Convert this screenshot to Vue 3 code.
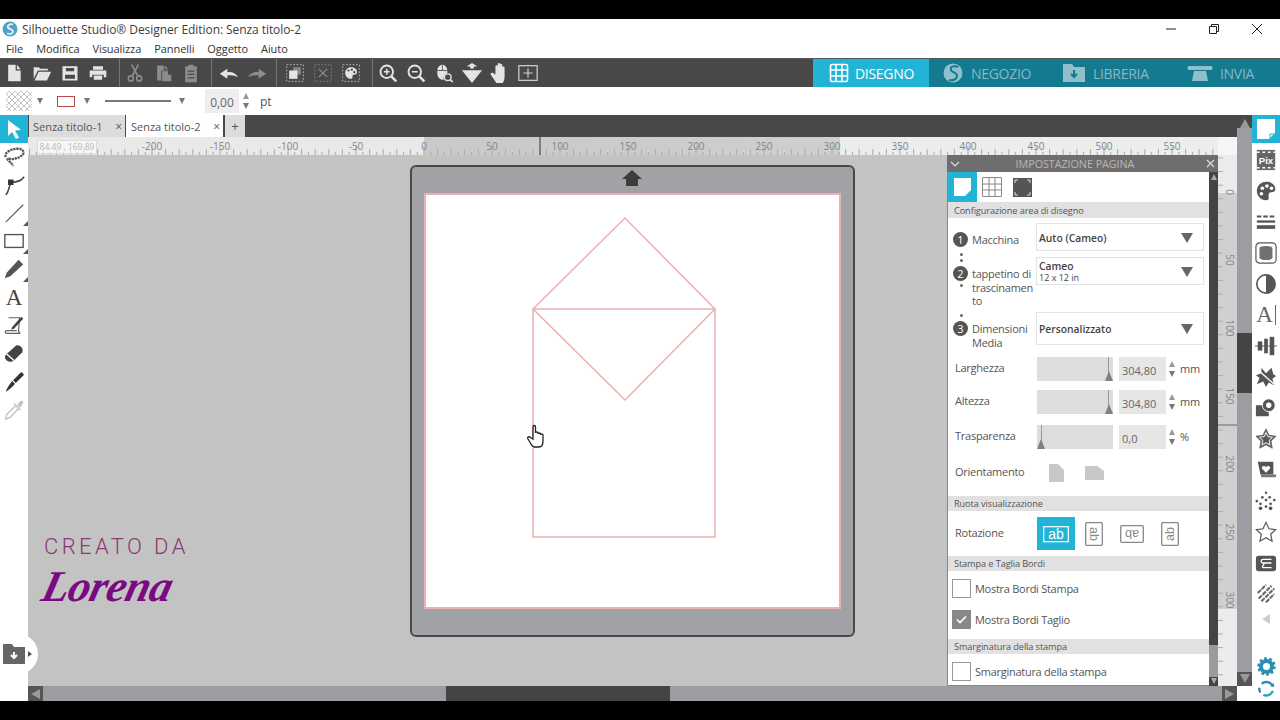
<script setup>
const hTicks = []
for (let u = -290; u <= 580; u += 5) {
  const x = 396 + u * 1.36
  const h = u % 50 === 0 ? 9 : u % 10 === 0 ? 6 : 3
  hTicks.push({ x, h })
}
const hLabels = []
for (let u = -200; u <= 550; u += 50) hLabels.push({ x: 396 + u * 1.36, t: u })
const vTicks = []
for (let u = -25; u <= 365; u += 10) {
  const y = 37 + u * 1.36
  vTicks.push({ y, w: u % 50 === 0 ? 8 : 5 })
}
const vLabels = []
for (let u = 0; u <= 300; u += 50) vLabels.push({ y: 37 + u * 1.36, t: u })
</script>

<template>
  <div class="app">
    <div class="black"></div>

    <header class="title">
      <svg class="logo" viewBox="0 0 16 16"><circle cx="8" cy="8" r="7.500" fill="#4fa3c7"/><path d="M11 3.500C8 2.500 5 4 6 6.500 7 8.500 11 8 11 10.500c0 2-3 3-6 2" fill="none" stroke="#e8f2f6" stroke-width="1.800"/></svg>
      <span class="title-text">Silhouette Studio® Designer Edition: Senza titolo-2</span>
      <div class="win">
        <svg width="12" height="12" viewBox="0 0 12 12"><path d="M1 6h10" stroke="#222" stroke-width="1"/></svg>
        <svg width="12" height="12" viewBox="0 0 12 12" fill="none" stroke="#222"><path d="M1.500 3.500h7v7h-7zM3.500 3.500v-2h7v7h-2"/></svg>
        <svg width="12" height="12" viewBox="0 0 12 12"><path d="M1 1l10 10M11 1L1 11" stroke="#222"/></svg>
      </div>
    </header>

    <nav class="menu">
      <span>File</span><span>Modifica</span><span>Visualizza</span><span>Pannelli</span><span>Oggetto</span><span>Aiuto</span>
    </nav>

    <div class="toolbar">
      <div class="tg g1">
        <div class="tb"><svg viewBox="0 0 24 24" fill="#e4e4e4"><path d="M5 2h9v7h6v13H5zM15.500 2l4.500 5.500h-4.500z"/></svg></div>
        <div class="tb"><svg viewBox="0 0 24 24" fill="#e4e4e4"><path d="M2 5h6l2 2h9v2H7L2 19zM8 10.500h15L18 21H3z"/></svg></div>
        <div class="tb"><svg viewBox="0 0 24 24" fill="#e4e4e4" fill-rule="evenodd"><path d="M3 4h18v17H3zM7 6v4h10V6zM6 14v5h12v-5z"/></svg></div>
        <div class="tb"><svg viewBox="0 0 24 24" fill="#e4e4e4"><path d="M6 4h12v4H6zM2 9h20v8h-3v-3H5v3H2zM7 15h10v5H7z"/></svg></div>
      </div>
      <div class="tg g2">
        <div class="tb"><svg viewBox="0 0 24 24" fill="none" stroke="#8c8c8c" stroke-width="2"><path d="M8 2l7 13M16 2L9 15"/><circle cx="7" cy="18.500" r="3"/><circle cx="17" cy="18.500" r="3"/></svg></div>
        <div class="tb"><svg viewBox="0 0 24 24" fill="#8c8c8c"><path d="M5 3h8v5h5v1h-8v12H5zM14 3l4 4h-4zM11 10h7v4h4v8H11z"/></svg></div>
        <div class="tb"><svg viewBox="0 0 24 24" fill="#8c8c8c" fill-rule="evenodd"><path d="M5 4h4V2h6v2h4v19H5zM8 9v1.500h8V9zM8 13v1.500h8V13zM8 17v1.500h8V17z"/></svg></div>
      </div>
      <div class="tg g3">
        <div class="tb"><svg viewBox="0 0 24 24" fill="#e4e4e4"><path d="M1 13l9-6v4c5-1 10 1 13 6-4-2-8-3-13-2v4z"/></svg></div>
        <div class="tb"><svg viewBox="0 0 24 24" fill="#8c8c8c"><path d="M23 13l-9-6v4C9 10 4 12 1 17c4-2 8-3 13-2v4z"/></svg></div>
      </div>
      <div class="tg g4">
        <div class="tb"><svg viewBox="0 0 24 24"><rect x="2" y="2" width="20" height="20" fill="none" stroke="#ccc" stroke-dasharray="2 2"/><rect x="10" y="5" width="9" height="9" fill="#888"/><rect x="5" y="9" width="10" height="10" fill="#e4e4e4"/></svg></div>
        <div class="tb"><svg viewBox="0 0 24 24"><rect x="2" y="2" width="20" height="20" fill="none" stroke="#888" stroke-dasharray="2 2"/><path d="M7 7l10 10M17 7L7 17" stroke="#8c8c8c" stroke-width="1.500"/></svg></div>
        <div class="tb"><svg viewBox="0 0 24 24"><rect x="2" y="2" width="20" height="20" fill="none" stroke="#ccc" stroke-dasharray="2 2"/><path d="M12 5c5 0 8 3 7 7-1 3-4 1-5 3s1 4-2 4c-4 0-7-3-7-7s3-7 7-7z" fill="#e4e4e4"/><circle cx="9" cy="9" r="1.300" fill="#444"/><circle cx="13" cy="8" r="1.300" fill="#444"/><circle cx="16" cy="11" r="1.300" fill="#444"/></svg></div>
      </div>
      <div class="tg g5">
        <div class="tb"><svg viewBox="0 0 24 24" fill="none" stroke="#e4e4e4" stroke-width="2.300"><circle cx="10.500" cy="10.500" r="7.500"/><path d="M16 16l6 6" stroke-width="3"/><path d="M7 10.500h7M10.500 7v7" stroke-width="1.800"/></svg></div>
        <div class="tb"><svg viewBox="0 0 24 24" fill="none" stroke="#e4e4e4" stroke-width="2.300"><circle cx="10.500" cy="10.500" r="7.500"/><path d="M16 16l6 6" stroke-width="3"/><path d="M7 10.500h7" stroke-width="1.800"/></svg></div>
        <div class="tb"><svg viewBox="0 0 24 24"><path d="M4 9c0-4 3-7 6-7s6 3 6 7v3a6 6 0 0 0-4 8h-2c-3 0-6-3-6-7z" fill="#e4e4e4"/><path d="M10 2v7M4 9h12" stroke="#484848"/><circle cx="16.500" cy="17" r="4" fill="none" stroke="#e4e4e4" stroke-width="1.600"/><path d="M19.500 20l3 3" stroke="#e4e4e4" stroke-width="2"/></svg></div>
        <div class="tb wide"><svg viewBox="0 0 24 24" fill="#e4e4e4"><path d="M12 1l6 4h-4v2h-4V5H6zM1 9h22L12 23z"/></svg></div>
        <div class="tb wide"><svg viewBox="0 0 24 24" fill="#e4e4e4"><path d="M8 23L2 14c-1-2 1-3 2.500-2L7 14V5c0-2 2.500-2 2.500 0v5V2.500c0-2 2.500-2 2.500 0V10V3.500c0-2 2.500-2 2.500 0V11V6.500c0-2 2.500-2 2.500 0V16c0 3-1 5-2 7z"/></svg></div>
        <div class="tb wide"><svg viewBox="0 0 24 24" fill="none" stroke="#d4d4d4" stroke-width="1.300"><rect x="2" y="4" width="20" height="16"/><path d="M12 7v10M7 12h10"/></svg></div>
      </div>
      <div class="nav">
        <div class="nav-item active">
          <svg width="20" height="20" viewBox="0 0 20 20" fill="none" stroke="#fff" stroke-width="1.600"><rect x="1.500" y="1.500" width="17" height="17" rx="1.500"/><path d="M7 1.500v17M13 1.500v17M1.500 7h17M1.500 13h17"/></svg>
          <span>DISEGNO</span>
        </div>
        <div class="nav-item negozio">
          <svg width="20" height="20" viewBox="0 0 20 20"><circle cx="10" cy="10" r="9.500" fill="#8fbfcb"/><path d="M15 4C10 2 7 4 8 7c1 3 6 2 6 6 0 3-4 5-8 4" fill="none" stroke="#137a90" stroke-width="2"/></svg>
          <span>NEGOZIO</span>
        </div>
        <div class="nav-item libreria">
          <svg width="22" height="20" viewBox="0 0 22 20"><path d="M0 1h9l2 3h11v15H0z" fill="#8fbfcb"/><path d="M11 7v6M8 11l3 3 3-3" fill="none" stroke="#137a90" stroke-width="2"/></svg>
          <span>LIBRERIA</span>
        </div>
        <div class="nav-item invia">
          <svg width="26" height="20" viewBox="0 0 26 20" fill="#8fbfcb"><path d="M2 3h22c2 0 2 4 0 4H2C0 7 0 3 2 3zM7 8h12l2 10H5z"/></svg>
          <span>INVIA</span>
        </div>
      </div>
    </div>

    <div class="options">
      <svg class="swatch" width="26" height="20" viewBox="0 0 26 20">
        <defs><pattern id="chk" width="6" height="6" patternUnits="userSpaceOnUse"><path d="M0 3L3 0l3 3-3 3z" fill="none" stroke="#c4c4c4"/></pattern></defs>
        <rect width="26" height="20" fill="url(#chk)"/>
      </svg>
      <i class="down d1"></i>
      <span class="redbox"></span>
      <i class="down d2"></i>
      <span class="lineprev"></span>
      <i class="down d3"></i>
      <span class="ptval">0,00</span>
      <span class="spin"><i class="up"></i><i class="down"></i></span>
      <span class="pt">pt</span>
    </div>

    <div class="work">
      <aside class="left">
        <div class="ltool sel"><svg width="20" height="22" viewBox="0 0 20 22"><path d="M4 2l13 10-6 .5 4 7-3 1.500-4-7-4 4z" fill="#fff"/></svg></div>
        <div class="ltool"><svg viewBox="0 0 24 24" fill="none" stroke="#555" stroke-width="2.600" stroke-dasharray="2.500 .8"><path d="M3 12C1 7 9 3 16 3c6 0 8 4 5 7-3 3-10 5-14 4-2-1-3 0-1 2 2 2 4 3 5 6"/></svg></div>
        <div class="ltool"><svg viewBox="0 0 24 24" fill="none" stroke="#444" stroke-width="1.600"><path d="M23 3c-3 5-8 6-14 6C6 13 7 19 3 23"/><rect x="5.500" y="6" width="6" height="6" fill="#333" stroke="none"/></svg></div>
        <div class="ltool tri"><svg viewBox="0 0 24 24"><path d="M3 22L22 3" stroke="#555" stroke-width="1.200"/></svg></div>
        <div class="ltool tri"><svg viewBox="0 0 24 24"><rect x="2" y="5" width="20" height="14" fill="none" stroke="#555" stroke-width="1.500"/></svg></div>
        <div class="ltool tri"><svg viewBox="0 0 24 24" fill="#555"><path d="M17 2l5 5L8 20l-6 2 2-6z"/></svg></div>
        <div class="ltool"><span class="tool-a">A</span></div>
        <div class="ltool"><svg viewBox="0 0 24 24" fill="none" stroke="#666" stroke-width="1.300"><path d="M6 3h12l-1 14c0 2 1 3 2 3H4c-2 0-2-3 0-3h11"/><path d="M10 13L20 2l2 2-10 11-3 1z" fill="#444" stroke="none"/></svg></div>
        <div class="ltool"><svg viewBox="0 0 24 24"><path d="M14 3c4-2 9 3 7 7l-9 9c-3 2-5 2-8 0-3-3-2-5 0-7z" fill="#444"/><path d="M4 12l8 7" stroke="#fff" stroke-width="1.500"/></svg></div>
        <div class="ltool"><svg viewBox="0 0 24 24" fill="#333"><path d="M20 1l3 3-9 9-3-3zM10 11l3 3c-3 4-6 6-10 9 1-4 4-8 7-12z"/></svg></div>
        <div class="ltool"><svg viewBox="0 0 24 24" fill="none" stroke="#c4c4c4" stroke-width="1.600"><path d="M14 7l3 3-9 10-5 2 1-5zM12 5l7 7"/><path d="M16 7l3-4c2-1 3 0 2 2l-3 4" fill="#c4c4c4"/></svg></div>
        <div class="bump">
          <svg width="22" height="20" viewBox="0 0 22 20"><path d="M0 0h9l2 3h11v17H0z" fill="#666"/><path d="M11 8v5M8 11l3 3 3-3" fill="none" stroke="#fff" stroke-width="2"/></svg>
          <i class="bump-tri"></i>
        </div>
      </aside>

      <main class="center">
        <div class="tabs">
          <div class="tab">Senza titolo-1<b>×</b></div>
          <div class="tab on">Senza titolo-2<b>×</b></div>
          <div class="tab plus">+</div>
        </div>

        <div class="hruler">
          <svg width="1190" height="18" class="rsvg">
            <line v-for="(t, i) in hTicks" :key="i" :x1="t.x" :x2="t.x" y1="18" :y2="18 - t.h" stroke="#aaa"/>
            <text v-for="l in hLabels" :key="l.t" :x="l.x" y="13" text-anchor="middle" class="rlabel">{{ l.t }}</text>
            <line x1="512" x2="512" y1="0" y2="18" stroke="#666" stroke-width="1.500"/>
          </svg>
          <span class="coord">84.49 , 169.89</span>
        </div>

        <div class="mid">
          <div class="stage">
            <div class="mat">
              <svg class="mat-arrow" width="20" height="16" viewBox="0 0 20 16"><path d="M10 0l10 9h-4v7H4V9H0z" fill="#3c3c3c"/></svg>
              <div class="sheet"></div>
              <svg class="drawing" width="445" height="472" viewBox="0 0 445 472" fill="none" stroke="#ecb0b2" stroke-width="1.500">
                <path d="M123 144L215 53l90 91-90 91z"/>
                <rect x="123" y="144" width="182" height="228"/>
              </svg>
            </div>

            <svg class="hand" width="18" height="24" viewBox="0 0 18 24"><path d="M6 15V3c0-2 2.500-2 2.500 0v6c0-1.500 2.500-1.500 2.500 0v1c0-1.500 2.500-1.500 2.500 0v1c0-1.500 2.500-1.500 2.500 0v6c0 3-1 6-4 6H8c-2 0-3-1-4-3l-3-5c-1-2 1-3 2.500-1.500z" fill="#fff" stroke="#222" stroke-width="1.300"/></svg>

            <div class="sign">
              <div class="sign-top">CREATO DA</div>
              <div class="sign-name">Lorena</div>
            </div>

            <section class="panel">
              <div class="p-head">
                <svg width="10" height="6" viewBox="0 0 10 6"><path d="M1 1l4 4 4-4" fill="none" stroke="#ddd" stroke-width="1.200"/></svg>
                <span>IMPOSTAZIONE PAGINA</span>
                <svg width="9" height="9" viewBox="0 0 9 9"><path d="M1 1l7 7M8 1L1 8" stroke="#ddd" stroke-width="1.200"/></svg>
              </div>
              <div class="p-wrap">
                <div class="p-body">
                  <div class="p-tabs">
                    <div class="p-tab on"><svg width="19" height="20" viewBox="0 0 19 20"><path d="M1 1h17v12l-6 6H1z" fill="#fff"/></svg></div>
                    <div class="p-tab"><svg width="20" height="20" viewBox="0 0 20 20" fill="none" stroke="#888"><path d="M.5.5h19v19H.5zM7 .5v19M13 .5v19M.5 7h19M.5 13h19"/></svg></div>
                    <div class="p-tab"><svg width="19" height="19" viewBox="0 0 19 19"><rect width="19" height="19" fill="#555"/><path d="M2 5V2h3M14 2h3v3M2 14v3h3M17 14v3h-3" fill="none" stroke="#ddd"/></svg></div>
                  </div>
                  <div class="sec">Configurazione area di disegno</div>

                  <div class="frow r1">
                    <div class="flabel"><i class="num">1</i><span>Macchina</span></div>
                    <div class="sel-box"><strong>Auto (Cameo)</strong><i class="big-down"></i></div>
                    <i class="dot d-a"></i>
                  </div>
                  <div class="frow r2">
                    <div class="flabel multi"><i class="num">2</i><span>tappetino di<br>trascinamen<br>to</span></div>
                    <div class="sel-box two"><div><strong>Cameo</strong><small>12 x 12 in</small></div><i class="big-down"></i></div>
                    <i class="dot d-b"></i>
                    <i class="dot d-c"></i>
                  </div>
                  <div class="frow r3">
                    <div class="flabel multi"><i class="num">3</i><span>Dimensioni<br>Media</span></div>
                    <div class="sel-box tall"><strong>Personalizzato</strong><i class="big-down"></i></div>
                  </div>

                  <div class="slrow s1">
                    <span class="sl-label">Larghezza</span>
                    <div class="slider end"><i></i></div>
                    <div class="num-in">304,80</div>
                    <span class="spin"><i class="up"></i><i class="down"></i></span>
                    <span class="unit">mm</span>
                  </div>
                  <div class="slrow s2">
                    <span class="sl-label">Altezza</span>
                    <div class="slider end"><i></i></div>
                    <div class="num-in">304,80</div>
                    <span class="spin"><i class="up"></i><i class="down"></i></span>
                    <span class="unit">mm</span>
                  </div>
                  <div class="slrow s3">
                    <span class="sl-label">Trasparenza</span>
                    <div class="slider start"><i></i></div>
                    <div class="num-in">0,0</div>
                    <span class="spin"><i class="up"></i><i class="down"></i></span>
                    <span class="unit">%</span>
                  </div>
                  <div class="orow">
                    <span class="sl-label">Orientamento</span>
                    <svg width="15" height="18" viewBox="0 0 15 18"><path d="M0 0h9l6 6v12H0z" fill="#c8c8c8"/></svg>
                    <svg class="land" width="19" height="14" viewBox="0 0 19 14"><path d="M0 0h12l7 5v9H0z" fill="#c8c8c8"/></svg>
                  </div>

                  <div class="sec s-rot">Ruota visualizzazione</div>
                  <div class="rotrow">
                    <span class="sl-label">Rotazione</span>
                    <div class="rot on"><svg width="26" height="20" viewBox="0 0 26 20"><rect x=".7" y="2.700" width="24.600" height="15" fill="none" stroke="#fff" stroke-width="1.200"/><text x="13" y="14.500" text-anchor="middle" class="ab white">ab</text></svg></div>
                    <div class="rot"><svg width="18" height="24" viewBox="0 0 18 24"><rect x=".7" y=".7" width="16.600" height="22.600" rx="1" fill="none" stroke="#888" stroke-width="1.300"/><text x="9" y="12" text-anchor="middle" class="ab" transform="rotate(90 9 12)" dy="4">ab</text></svg></div>
                    <div class="rot"><svg width="24" height="18" viewBox="0 0 24 18"><rect x=".7" y=".7" width="22.600" height="16.600" rx="1" fill="none" stroke="#888" stroke-width="1.300"/><text x="12" y="9" text-anchor="middle" class="ab" transform="rotate(180 12 9)" dy="4">ab</text></svg></div>
                    <div class="rot"><svg width="18" height="24" viewBox="0 0 18 24"><rect x=".7" y=".7" width="16.600" height="22.600" rx="1" fill="none" stroke="#888" stroke-width="1.300"/><text x="9" y="12" text-anchor="middle" class="ab" transform="rotate(-90 9 12)" dy="4">ab</text></svg></div>
                  </div>

                  <div class="sec s-print">Stampa e Taglia Bordi</div>
                  <label class="chk c1"><i class="box"></i>Mostra Bordi Stampa</label>
                  <label class="chk c2"><i class="box checked"><svg width="11" height="9" viewBox="0 0 11 9"><path d="M1 4.500l3 3 6-6" fill="none" stroke="#fff" stroke-width="1.700"/></svg></i>Mostra Bordi Taglio</label>
                  <div class="sec s-bleed">Smarginatura della stampa</div>
                  <label class="chk c3"><i class="box"></i>Smarginatura della stampa</label>
                </div>
                <div class="p-scroll">
                  <i class="pu"></i>
                  <div class="p-track"></div>
                  <i class="pd"></i>
                </div>
              </div>
            </section>
          </div>

          <div class="vruler">
            <svg width="19" height="531">
              <line v-for="(t, i) in vTicks" :key="i" x1="0" :x2="t.w" :y1="t.y" :y2="t.y" stroke="#aaa"/>
              <text v-for="l in vLabels" :key="l.t" class="rlabel" text-anchor="middle" :transform="`translate(8 ${l.y}) rotate(90)`">{{ l.t }}</text>
              <line x1="0" x2="19" y1="270" y2="270" stroke="#666"/>
            </svg>
          </div>
        </div>

        <div class="hscroll">
          <div class="sb-btn"><i class="tri-l"></i></div>
          <div class="h-track"><div class="h-thumb"></div></div>
          <div class="sb-btn"><i class="tri-r"></i></div>
        </div>
      </main>

      <div class="vscroll">
        <div class="v-top"><i class="tri-u"></i></div>
        <div class="v-track"><div class="v-thumb"></div></div>
        <div class="v-bot"><i class="tri-d"></i></div>
        <div class="v-end"></div>
      </div>

      <aside class="right">
        <div class="rtool sel"><svg width="20" height="22" viewBox="0 0 20 22"><path d="M1 1h18v14l-6 6H1z" fill="#fff"/><path d="M14 20v-4h4" fill="none" stroke="#22b4d6"/></svg></div>
        <div class="rtool"><svg viewBox="0 0 24 24"><rect x="2" y="1" width="20" height="22" fill="#666"/><path d="M2 3.500h20M2 20.500h20" stroke="#fff" stroke-dasharray="3 3" stroke-width="1.500"/><text x="12" y="16.500" text-anchor="middle" class="pix">Pix</text></svg></div>
        <div class="rtool"><svg viewBox="0 0 24 24"><path d="M12 2c7 0 11 4 10 9-1 4-6 1-7 4s2 7-3 7C6 22 2 17 2 12S6 2 12 2z" fill="#555"/><circle cx="8" cy="9" r="2" fill="#fff"/><circle cx="13" cy="6.500" r="2" fill="#fff"/><circle cx="18" cy="9" r="2" fill="#fff"/><circle cx="7" cy="15" r="2" fill="#fff"/></svg></div>
        <div class="rtool"><svg viewBox="0 0 24 24"><path d="M2 6h20" stroke="#555" stroke-width="2" stroke-dasharray="5 2"/><path d="M2 11.500h20" stroke="#555" stroke-width="2.500"/><path d="M2 17.500h20" stroke="#555" stroke-width="4"/></svg></div>
        <div class="rtool"><svg viewBox="0 0 24 24"><rect x="1" y="1" width="22" height="22" rx="4" fill="#fff" stroke="#555" stroke-width="1.300"/><path d="M7 5c3-1 7-1 10 0 3 1 2 3 2 7s1 6-2 7c-3 1-7 1-10 0-3-1-2-3-2-7s-1-6 2-7z" fill="#707070"/></svg></div>
        <div class="rtool"><svg viewBox="0 0 24 24"><circle cx="12" cy="12" r="10" fill="#fff" stroke="#555" stroke-width="1.800"/><path d="M12 2a10 10 0 0 1 0 20z" fill="#555"/></svg></div>
        <div class="rtool"><span class="tool-a2">A<em></em></span></div>
        <div class="rtool"><svg viewBox="0 0 24 24" fill="#555"><path d="M0 12h24" stroke="#555"/><rect x="3" y="7" width="5" height="10"/><rect x="10" y="4" width="4" height="16"/><rect x="16" y="2" width="5" height="20"/></svg></div>
        <div class="rtool"><svg viewBox="0 0 24 24"><path d="M7 2l5 6 6-6 2 7 3 2-4 3 2 7-6-3-3 5-3-6-7 3 3-7-4-3 6-2z" fill="#555"/><path d="M3 4l18 16" stroke="#fff" stroke-width="1.500"/></svg></div>
        <div class="rtool"><svg viewBox="0 0 24 24"><rect x="1" y="9" width="14" height="12" fill="#555"/><circle cx="15" cy="9" r="7" fill="#555" stroke="#fff"/><circle cx="15" cy="9" r="3" fill="#fff"/></svg></div>
        <div class="rtool"><svg viewBox="0 0 24 24"><path d="M12 1l3.300 7 7.700 1-5.600 5.300 1.400 7.700L12 18.300 5.200 22l1.400-7.700L1 9l7.700-1z" fill="#666" stroke="#666"/><path d="M12 5l2 4.500 5 .6-3.600 3.400.9 4.900-4.300-2.400-4.300 2.400.9-4.900L5 10.100l5-.6z" fill="#555" stroke="#fff"/></svg></div>
        <div class="rtool"><svg viewBox="0 0 24 24"><path d="M3 3h17v14H6z" fill="#555"/><path d="M6 17h17v3H7z" fill="#777"/><path d="M12 15l-4-4c-2-3 2-5 4-2 2-3 6-1 4 2z" fill="#fff"/></svg></div>
        <div class="rtool"><svg viewBox="0 0 24 24" fill="#555"><circle cx="12" cy="3" r="1.300"/><circle cx="8" cy="8" r="1.500"/><circle cx="16" cy="8" r="1.500"/><circle cx="2" cy="12" r="1.500"/><circle cx="12" cy="11" r="1.500"/><circle cx="21" cy="11" r="1.500"/><circle cx="6" cy="15" r="1.500"/><circle cx="17" cy="15" r="1.500"/><circle cx="6" cy="20" r="2"/><circle cx="12" cy="18" r="1.500"/><circle cx="17" cy="20" r="2"/></svg></div>
        <div class="rtool"><svg viewBox="0 0 24 24"><path d="M12 1.500l3.200 7 7.300.9-5.400 5 1.500 7.600-6.600-3.800-6.600 3.800 1.500-7.600-5.400-5 7.300-.9z" fill="none" stroke="#555" stroke-width="1.300"/></svg></div>
        <div class="rtool"><svg viewBox="0 0 24 24"><rect x="1" y="4" width="22" height="17" rx="3" fill="#555"/><path d="M9 8h9M9 12h9M9 17h9M9 8c-3 0-3 4 0 4s-3 5 0 5" fill="none" stroke="#fff" stroke-width="1.400"/></svg></div>
        <div class="rtool"><svg viewBox="0 0 24 24" stroke="#666" stroke-width="2.200" stroke-dasharray="5 1"><path d="M3 11L12 2M4 17L18 3M7 20L21 6M12 21l9-9"/></svg></div>
        <div class="rtool small"><i class="tri-l2"></i></div>
        <div class="rtool gear"><svg viewBox="0 0 24 24"><circle cx="12" cy="12" r="7" fill="none" stroke="#2b8db0" stroke-width="5"/><circle cx="12" cy="12" r="10.200" fill="none" stroke="#2b8db0" stroke-width="3" stroke-dasharray="3.500 2.900"/></svg></div>
        <div class="rtool sync"><svg viewBox="0 0 24 24" fill="none" stroke-width="3"><path d="M6 6a9 9 0 0 1 14 3" stroke="#2b8db0"/><path d="M20 15a9 9 0 0 1-12 5" stroke="#25a7b8"/><path d="M4 17a9 9 0 0 1-1-6" stroke="#2b8db0"/><path d="M22 10l-5-1 4-4z" fill="#2b8db0" stroke="none"/></svg></div>
      </aside>
    </div>

    <div class="black bottom"></div>
  </div>
</template>

<style>
html, body { margin: 0; background: #000; }
</style>

<style scoped>
.app { width: 1280px; height: 720px; display: flex; flex-direction: column; overflow: hidden; font-family: "Open Sans", "Noto Sans", sans-serif; color: #444; background: #fff; }
.black { height: 19px; background: #000; flex: none; }
.title { height: 20px; flex: none; display: flex; align-items: center; padding-left: 2px; background: #fff; color: #3c3c3c; font-size: 12px; }
.logo { width: 16px; height: 16px; margin-right: 4px; }
.title-text { letter-spacing: -.07px; }
.win { margin-left: auto; display: flex; gap: 31px; padding-right: 17px; }
.menu { height: 19px; flex: none; display: flex; align-items: center; padding-left: 6px; gap: 13px; font-size: 11px; letter-spacing: -.07px; color: #333; }
.toolbar { height: 29px; flex: none; background: #484848; display: flex; border-top: 1px solid #555; box-sizing: border-box; }
.tg { display: flex; border-right: 1px solid #777; height: 28px; }
.tb { width: 28px; display: flex; align-items: center; justify-content: center; }
.tb svg { width: 20px; height: 20px; }
.tb.wide svg { width: 22px; height: 22px; }
.g1 { padding-right: 7px; }
.g2 { margin-left: 1px; padding-right: 6px; }
.g3 { margin-left: 3px; padding-right: 5px; }
.g4 { margin-left: 4px; padding-right: 7px; }
.g5 { margin-left: 1px; border-right: 0; }
.nav { margin-left: auto; width: 467px; background: #137a90; display: flex; height: 28px; margin-top: 0; }
.nav-item { display: flex; align-items: center; height: 100%; font-size: 14px; color: #86b9c6; letter-spacing: -.3px; box-sizing: border-box; }
.nav-item.active { width: 116px; background: #22b4d6; color: #fff; padding-left: 16px; gap: 6px; }
.negozio { margin-left: 14px; gap: 8px; width: 110px; }
.libreria { margin-left: 10px; gap: 8px; width: 124px; }
.invia { gap: 7px; }
.options { height: 28px; flex: none; background: #fff; display: flex; align-items: center; position: relative; font-size: 12px; }
.swatch { margin-left: 6px; }
.down { display: block; width: 0; height: 0; border: 3.500px solid transparent; border-top: 6px solid #777; border-bottom: 0; }
.up { display: block; width: 0; height: 0; border: 3.500px solid transparent; border-bottom: 6px solid #999; border-top: 0; }
.d1 { margin-left: 5px; }
.redbox { width: 16px; height: 9px; border: 1px solid #b84a4a; margin-left: 14px; }
.d2 { margin-left: 9px; }
.lineprev { width: 66px; height: 2px; background: #777; margin-left: 15px; }
.d3 { margin-left: 8px; }
.ptval { width: 34px; height: 24px; background: #eee; margin-left: 20px; display: flex; align-items: center; justify-content: center; padding-top: 2px; box-sizing: border-box; color: #666; }
.spin { display: flex; flex-direction: column; gap: 4px; width: 7px; align-items: center; }
.options .spin { margin-left: 3px; }
.pt { margin-left: 11px; color: #555; }
.work { flex: 1; display: flex; min-height: 0; }
.left { width: 28px; flex: none; background: #fff; position: relative; z-index: 3; }
.ltool { height: 28.100px; width: 28px; display: flex; align-items: center; justify-content: center; position: relative; }
.ltool svg { width: 22px; height: 22px; }
.ltool.sel { height: 28px; background: #22b4d6; }
.ltool.sel svg { width: 20px; height: 22px; }
.ltool.tri::after { content: ""; position: absolute; right: 0; bottom: 1px; border-style: solid; border-width: 0 0 5px 5px; border-color: transparent transparent #555 transparent; }
.tool-a { font-family: "Liberation Serif", serif; font-size: 23px; line-height: 1; color: #444; }
.bump { position: absolute; left: 0; top: 519px; width: 38px; height: 40px; background: #fff; border-radius: 0 20px 20px 0; display: flex; align-items: center; padding-left: 3px; box-sizing: border-box; }
.bump-tri { margin-left: 3px; border-style: solid; border-width: 3.500px 0 3.500px 4px; border-color: transparent transparent transparent #555; }
.center { width: 1209px; flex: none; display: flex; flex-direction: column; min-height: 0; }
.tabs { height: 22px; flex: none; background: #484848; display: flex; font-size: 11px; color: #555; padding-left: 1px; }
.tab { width: 96px; background: #dcdcdc; display: flex; align-items: center; justify-content: space-between; padding: 0 3px 0 4px; box-sizing: border-box; margin-right: 1px; }
.tab b { font-weight: 400; font-size: 12px; color: #555; }
.tab.on { background: #fff; margin-right: 2px; width: 97px; padding-left: 5px; }
.tab.plus { width: 20px; justify-content: center; padding: 0; font-size: 13px; }
.hruler { height: 18px; flex: none; position: relative; background: linear-gradient(90deg, #e9e9e9 0, #e9e9e9 396px, #c9c9c9 396px, #cfcfcf 812px, #ececec 812px, #ededed 1190px, #f6f6f6 1190px); }
.rsvg { display: block; }
.rlabel { font-size: 10px; fill: #858585; font-family: "Open Sans", sans-serif; }
.coord { position: absolute; left: 9px; top: 3px; width: 58px; height: 12px; border: 1px solid #ddd; background: rgba(255,255,255,.6); font-size: 8.500px; line-height: 12px; text-align: center; color: #b8b8b8; }
.mid { flex: 1; display: flex; min-height: 0; }
.stage { flex: 1; background: #c3c3c3; position: relative; overflow: hidden; }
.vruler { width: 19px; flex: none; background: linear-gradient(180deg, #ececec 0, #ececec 38px, #d0d0d0 38px, #d0d0d0 454px, #ececec 454px); }
.vruler svg { display: block; }
.mat { position: absolute; left: 382px; top: 10px; width: 445px; height: 472px; background: #a1a2a5; border: 2px solid #4a4a4a; border-radius: 6px; box-sizing: border-box; }
.mat-arrow { position: absolute; left: 210px; top: 3px; }
.sheet { position: absolute; left: 12px; top: 26px; width: 417px; height: 416px; box-sizing: border-box; background: #fff; border: 2px solid #ecb0b2; }
.drawing { position: absolute; left: -2px; top: -2px; }
.hand { position: absolute; left: 499px; top: 269px; }
.sign { position: absolute; left: 12px; top: 379px; }
.sign-top { font-family: Roboto, sans-serif; font-weight: 300; font-size: 22px; letter-spacing: 3.400px; color: #8a3a70; line-height: 26px; margin-left: 4px; }
.sign-name { font-family: "Liberation Serif", serif; font-style: italic; font-weight: 700; font-size: 44px; line-height: 48px; color: #7a0a82; transform: skewX(-14deg); transform-origin: left bottom; letter-spacing: -.5px; margin: 3px 0 0 -3px; }
.panel { position: absolute; right: 0; top: 0; bottom: 0; width: 271px; display: flex; flex-direction: column; }
.p-head { height: 17px; flex: none; background: #6e6e6e; color: #b8b8b8; display: flex; align-items: center; justify-content: space-between; padding: 0 3px; font-size: 10.700px; }
.p-head span { margin-right: 16px; }
.p-wrap { flex: 1; display: flex; min-height: 0; }
.p-body { flex: 1; background: #fff; border-left: 1px solid #888; border-bottom: 1px solid #888; display: flex; flex-direction: column; min-width: 0; }
.p-tabs { height: 30px; flex: none; display: flex; }
.p-tab { width: 30px; display: flex; align-items: center; justify-content: center; }
.p-tab.on { background: #22b4d6; width: 29px; }
.sec { height: 15px; flex: none; background: #e1e1e1; font-size: 9.200px; letter-spacing: -.1px; line-height: 15px; padding-left: 6px; color: #555; }
.p-tabs + .sec { height: 16px; line-height: 17px; }
.frow { display: flex; flex: none; align-items: flex-start; position: relative; }
.r1 { margin-top: 5px; height: 28px; }
.r2 { margin-top: 6px; height: 55px; }
.r3 { height: 33px; }
.dot { position: absolute; left: 12px; width: 3px; height: 3px; border-radius: 50%; background: #666; }
.d-a { top: 30px; box-shadow: 0 6px 0 #666; }
.d-b { top: 27px; }
.d-c { top: 57px; }
.flabel { width: 88px; display: flex; font-size: 11px; letter-spacing: -.25px; line-height: 13.500px; color: #555; padding: 10px 0 0 5px; box-sizing: border-box; }
.flabel.multi { padding-top: 10px; }
.flabel span { margin-left: 4px; }
.num { flex: none; width: 15px; height: 15px; border-radius: 50%; background: #555; color: #fff; font-style: normal; font-size: 11px; line-height: 15px; text-align: center; margin-top: -1px; letter-spacing: 0; }
.sel-box { width: 168px; height: 28px; border: 1px solid #e4e4e4; box-sizing: border-box; display: flex; align-items: center; justify-content: space-between; padding: 1px 10px 0 2px; font-size: 10.300px; color: #444; }
.sel-box strong { font-weight: 600; display: block; line-height: 12px; }
.sel-box small { display: block; font-size: 9px; line-height: 11px; }
.sel-box.tall { height: 33px; }
.big-down { width: 0; height: 0; border: 6px solid transparent; border-top: 10px solid #666; border-bottom: 0; }
.slrow { display: flex; align-items: center; flex: none; height: 24px; font-size: 11px; color: #555; }
.s1 { margin-top: 12px; }
.s2 { margin-top: 9px; }
.s3 { margin-top: 11px; }
.sl-label { width: 89px; padding: 0 0 3px 7px; box-sizing: border-box; flex: none; font-size: 11px; letter-spacing: -.25px; color: #555; }
.slider { width: 76px; height: 100%; background: #ddd; position: relative; flex: none; }
.slider i { position: absolute; bottom: 0; width: 0; height: 0; border-style: solid; border-width: 0 4.500px 10px 4.500px; border-color: transparent transparent #808080 transparent; }
.slider::before { content: ""; position: absolute; top: 0; bottom: 0; width: 1px; background: #999; }
.slider.end i { right: 0; }
.slider.end::before { right: 4px; }
.slider.start i { left: 0; }
.slider.start::before { left: 4px; }
.num-in { width: 47px; height: 100%; margin-left: 6px; background: #e6e6e6; display: flex; align-items: center; padding: 2px 0 0 3px; box-sizing: border-box; font-size: 11px; color: #666; flex: none; }
.slrow .spin { margin-left: 2px; }
.unit { margin: 0 0 2px 5px; color: #555; letter-spacing: -.2px; }
.orow { height: 24px; margin-top: 12px; flex: none; display: flex; align-items: center; }
.orow svg { margin-left: 12px; }
.orow .land { margin-left: 21px; }
.s-rot { margin-top: 11px; }
.rotrow { margin-top: 6px; height: 33px; display: flex; align-items: center; flex: none; }
.rot { width: 38px; height: 33px; display: flex; align-items: center; justify-content: center; flex: none; }
.rot.on { background: #22b4d6; }
.ab { font-size: 12.500px; fill: #888; font-family: "Liberation Sans", sans-serif; }
.ab.white { fill: #fff; font-size: 14px; }
.s-print { margin-top: 6px; }
.chk { display: flex; align-items: center; height: 19px; flex: none; font-size: 11px; letter-spacing: -.27px; color: #555; padding-left: 4px; }
.box { width: 19px; height: 19px; border: 1px solid #999; box-sizing: border-box; margin-right: 4px; display: flex; align-items: center; justify-content: center; }
.box.checked { background: #888; border-color: #888; }
.c1 { margin-top: 8px; }
.c2 { margin-top: 12px; }
.s-bleed { margin-top: 10px; }
.c3 { margin-top: 8px; }
.p-scroll { width: 9px; flex: none; background: #444; display: flex; flex-direction: column; align-items: center; }
.pu { margin-top: 2px; border-style: solid; border-width: 0 3px 6px 3px; border-color: transparent transparent #aaa transparent; }
.p-track { flex: 1; }
.p-track::after { content: ""; display: block; width: 9px; height: 32px; background: #9b9b9b; margin-top: 465px; }
.pd { margin-bottom: 2px; border-style: solid; border-width: 6px 3px 0 3px; border-color: #aaa transparent transparent transparent; }
.hscroll { height: 15px; flex: none; display: flex; background: #9c9da0; }
.sb-btn { width: 15px; flex: none; background: #555; display: flex; align-items: center; justify-content: center; }
.h-track { flex: 1; position: relative; }
.h-thumb { position: absolute; left: 403px; width: 224px; top: 0; bottom: 0; background: #444; }
.tri-l { border-style: solid; border-width: 5.500px 9px 5.500px 0; border-color: transparent #999 transparent transparent; }
.tri-r { border-style: solid; border-width: 5.500px 0 5.500px 9px; border-color: transparent transparent transparent #999; }
.vscroll { width: 15px; flex: none; display: flex; flex-direction: column; background: #9c9da0; }
.v-top { height: 13px; flex: none; background: #484848; display: flex; justify-content: center; padding-top: 3px; box-sizing: border-box; }
.tri-u { border-style: solid; border-width: 0 5.500px 9px 5.500px; border-color: transparent transparent #999 transparent; }
.v-track { flex: 1; position: relative; }
.v-thumb { position: absolute; left: 0; right: 0; top: 205px; height: 60px; background: #444; }
.v-bot { height: 14px; flex: none; background: #555; display: flex; justify-content: center; padding-top: 2px; box-sizing: border-box; }
.tri-d { border-style: solid; border-width: 9px 5.500px 0 5.500px; border-color: #999 transparent transparent transparent; }
.v-end { height: 15px; flex: none; background: #fff; }
.right { width: 28px; flex: none; background: #fff; display: flex; flex-direction: column; }
.rtool { height: 31px; flex: none; display: flex; align-items: center; justify-content: center; }
.rtool svg { width: 22px; height: 22px; }
.rtool.sel { height: 28px; background: #22b4d6; margin-bottom: 1px; }
.rtool.sel svg { width: 20px; height: 22px; }
.rtool.small { height: 20px; }
.tri-l2 { border-style: solid; border-width: 5px 8px 5px 0; border-color: transparent #ccc transparent transparent; }
.gear { margin-top: auto; height: 24px; }
.gear svg { width: 19px; height: 19px; }
.sync { height: 23px; padding-bottom: 2px; box-sizing: border-box; }
.sync svg { width: 19px; height: 19px; }
.pix { font-size: 10.500px; fill: #fff; font-family: "Liberation Sans", sans-serif; font-weight: 700; }
.tool-a2 { font-family: "Liberation Serif", serif; font-size: 23px; line-height: 1; color: #666; display: flex; align-items: center; }
.tool-a2 em { display: block; width: 1px; height: 20px; background: #666; margin-left: 2px; }
</style>
